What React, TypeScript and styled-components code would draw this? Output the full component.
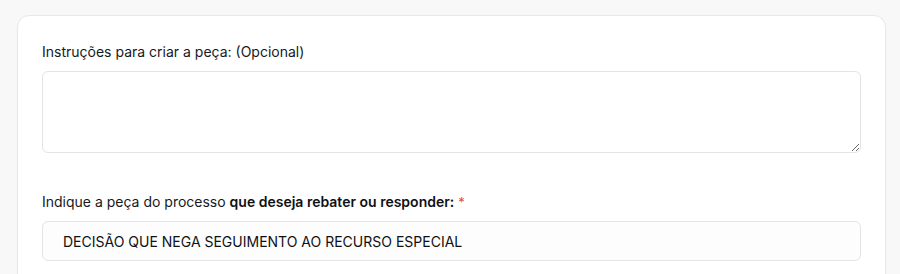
import React from 'react'
import styled, { createGlobalStyle } from 'styled-components'

const GlobalStyle = createGlobalStyle`
  body {
    margin: 0;
    background: #f8f8f8;
    font-family: Inter, "Noto Sans", sans-serif;
  }
`

const Page = styled.div`
  padding: 15px 14px 0 17px;
  height: 274px;
  box-sizing: border-box;
  overflow: hidden;
`

const Card = styled.div`
  background: #ffffff;
  border: 1px solid #e8e8e8;
  border-radius: 12px;
  padding: 26px 24px 40px 24px;
  display: flex;
  flex-direction: column;
  gap: 39px;
  box-shadow: 0 1px 2px rgba(0, 0, 0, 0.03);
`

const Field = styled.div`
  display: flex;
  flex-direction: column;
  gap: 9px;
`

const Label = styled.label`
  font-size: 14px;
  line-height: 20px;
  color: #16191d;
  font-weight: 400;

  b {
    font-weight: 600;
    color: #0f1115;
  }
`

const Required = styled.span`
  color: #e5484d;
  margin-left: 4px;
  font-size: 13px;
`

const TextArea = styled.textarea`
  display: block;
  box-sizing: border-box;
  width: 100%;
  height: 82px;
  border: 1px solid #e4e4e7;
  border-radius: 6px;
  background: #ffffff;
  padding: 10px 16px;
  font-family: inherit;
  font-size: 14px;
  resize: vertical;
  outline: none;
`

const Input = styled.input`
  box-sizing: border-box;
  width: 100%;
  height: 40px;
  border: 1px solid #e4e4e7;
  border-radius: 6px;
  background: #fdfdfd;
  padding: 0 20px;
  font-family: inherit;
  font-size: 14px;
  color: #0f1115;
  outline: none;
`

export default function App() {
  return (
    <>
      <GlobalStyle />
      <Page>
        <Card>
          <Field>
            <Label>Instruções para criar a peça: (Opcional)</Label>
            <TextArea />
          </Field>
          <Field>
            <Label>
              Indique a peça do processo <b>que deseja rebater ou responder:</b>
              <Required>*</Required>
            </Label>
            <Input readOnly value="DECISÃO QUE NEGA SEGUIMENTO AO RECURSO ESPECIAL" />
          </Field>
        </Card>
      </Page>
    </>
  )
}
